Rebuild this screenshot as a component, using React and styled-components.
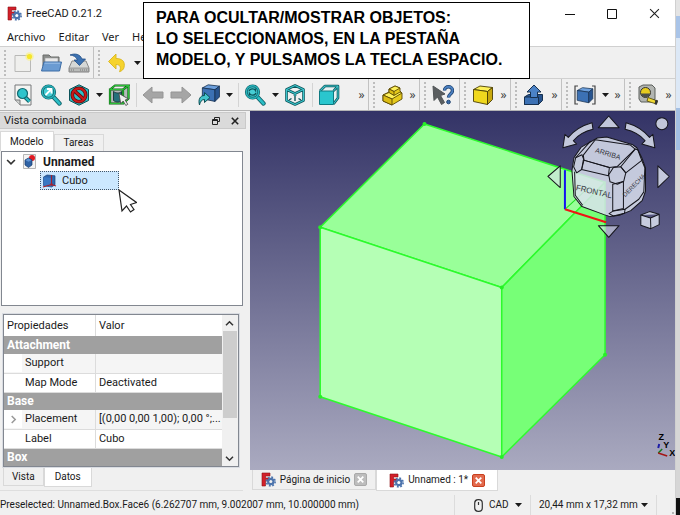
import React, { useState } from "react";
import styled, { createGlobalStyle, css } from "styled-components";

const menus = ["Archivo", "Editar", "Ver", "He"];

const properties = [
  { group: "Attachment" },
  { name: "Support", value: "", shaded: true },
  { name: "Map Mode", value: "Deactivated" },
  { group: "Base" },
  { name: "Placement", value: "[(0,00 0,00 1,00); 0,00 °;...", shaded: true, expandable: true },
  { name: "Label", value: "Cubo" },
  { group: "Box" },
];

/* ---------- icons ---------- */

const Icon = ({ size = 22, children }) => (
  <svg width={size} height={size} viewBox="0 0 22 22" fill="none" aria-hidden="true">
    {children}
  </svg>
);

const FreeCadLogo = () => (
  <svg width="15" height="15" viewBox="0 0 15 15" aria-hidden="true">
    <path d="M1 1h8v3H4.500v2H8v3H4.500v5H1z" fill="#d3202a" stroke="#8c1016" strokeWidth=".6" />
    <circle cx="9.800" cy="9.500" r="4.400" fill="none" stroke="#4c74ad" strokeWidth="1.600" strokeDasharray="1.800 1.650" />
    <circle cx="9.800" cy="9.500" r="2.700" fill="none" stroke="#4c74ad" strokeWidth="2.200" />
  </svg>
);

const NewIcon = () => (
  <Icon>
    <path d="M3 3.500h15.500v16H3z" fill="#efefed" stroke="#b9b9b7" />
    <circle cx="17.500" cy="4.500" r="4.300" fill="#fbf17a" opacity=".6" />
    <circle cx="17.500" cy="4.500" r="2.600" fill="#f5e62b" />
  </Icon>
);

const OpenIcon = () => (
  <Icon>
    <path d="M3 3h6l2 2h8v9H3z" fill="#8b8d8b" stroke="#6a6c6a" />
    <path d="M5 6h13v6H5z" fill="#e9e9e9" stroke="#9a9a9a" strokeWidth=".6" />
    <path d="M4 10h17.500l-2 9H1.500z" fill="#6a9bd2" stroke="#3d6ca5" />
    <path d="M4.600 11.200h15.600" stroke="#9cc0e8" />
  </Icon>
);

const SaveIcon = () => (
  <Icon>
    <path d="M4 9h14l3 7v4H1v-4z" fill="#d6d8d6" stroke="#888" />
    <path d="M1.500 16h19v3.600h-19z" fill="#b9bbb9" stroke="#888" strokeWidth=".7" />
    <path d="M12 18h7M3 18h4" stroke="#777" strokeDasharray="1 1" />
    <path d="M2 3c5-2 10-1 12 4h3.500l-6 6.500L6 8h3.500C8 4.500 5.500 3.500 2 3z" fill="#3d72b2" stroke="#234f86" strokeWidth=".8" />
  </Icon>
);

const UndoIcon = () => (
  <Icon>
    <path d="M10 2v4.500c6 0 9.500 3 8 9-.6 2-1.800 3.300-4.500 4.200 2-4.500.5-7.200-3.500-7.200V17L2.500 9.500z" fill="#f6d32d" stroke="#d8b520" strokeWidth=".9" />
  </Icon>
);

const Lens = () => (
  <g>
    <path d="M13 12.500l6.500 7" stroke="#0f6067" strokeWidth="4.400" strokeLinecap="round" />
    <path d="M13 12.500l6.500 7" stroke="#2bbdc5" strokeWidth="2.600" strokeLinecap="round" />
    <circle cx="8.500" cy="8" r="6.200" fill="#46cdd4" stroke="#0f6067" strokeWidth="2.800" />
    <circle cx="8.500" cy="8" r="6.200" stroke="#28b3bb" strokeWidth="1.400" />
  </g>
);

const FitAllIcon = () => (
  <Icon>
    <path d="M3 1h16v20H8l-5-5z" fill="#f4f4f2" stroke="#77797a" />
    <path d="M3 16h5v5" fill="#cfd1cf" stroke="#77797a" />
    <path d="M13 13l4.500 4.500" stroke="#0f6067" strokeWidth="4" />
    <path d="M13 13l4.500 4.500" stroke="#2bbdc5" strokeWidth="2.200" />
    <circle cx="10.500" cy="9.500" r="5" fill="#2fc4cc" stroke="#136b72" strokeWidth="1.200" />
  </Icon>
);

const FitSelectionIcon = () => (
  <Icon>
    <Lens />
    <path d="M5.500 11l5.500-5.500M7 5h4.500v4.500" stroke="#fff" strokeWidth="1.800" />
  </Icon>
);

const SyncViewIcon = () => (
  <Icon>
    <Lens />
    <path d="M5 7c1-2.500 5-3 6.500-.5V4.500M12 9c-1 2.500-5 3-6.500.5v2" stroke="#0c5359" strokeWidth="1.400" />
  </Icon>
);

const DrawStyleIcon = () => (
  <Icon>
    <path d="M11 .8l9.500 4.700v11L11 21.200l-9.500-4.700v-11z" fill="#2bc0c8" stroke="#0d5359" />
    <circle cx="11" cy="11" r="6.700" stroke="#5b0808" strokeWidth="3.600" />
    <path d="M6.300 6.800l9.400 8.400" stroke="#5b0808" strokeWidth="3.600" />
    <circle cx="11" cy="11" r="6.700" stroke="#c91a1a" strokeWidth="2.200" />
    <path d="M6.300 6.800l9.400 8.400" stroke="#c91a1a" strokeWidth="2.200" />
  </Icon>
);

const BoundingBoxIcon = () => (
  <Icon>
    <path d="M3 6l13-1 4-3v12l-5 5H3z" fill="#b5babb" />
    <path d="M5.500 7.500c3 2 6 2 8 0v9c-3 2-5 2-8 0z" fill="#25707a" stroke="#203b40" />
    <path d="M2 5.500h13v14H2zM2 5.500L7 1.500h13.500L15 5.500M20.500 1.500v13L15 19.500" stroke="#0b5a12" strokeWidth="2.200" />
    <path d="M2 5.500h13v14H2zM2 5.500L7 1.500h13.500L15 5.500M20.500 1.500v13L15 19.500" stroke="#2bbf37" strokeWidth="1.200" />
    <path d="M11 9.500l9.500 5.500-3.400 1 2.700 4.300-2 1.200-2.600-4.400-2.500 2.500z" fill="#eee" stroke="#444" strokeWidth=".8" />
  </Icon>
);

const BackIcon = () => (
  <Icon>
    <path d="M1 11l9-8v5h11v6H10v5z" fill="#a5a5a5" stroke="#959595" />
  </Icon>
);

const ForwardIcon = () => (
  <Icon>
    <path d="M21 11l-9-8v5H1v6h11v5z" fill="#a5a5a5" stroke="#959595" />
  </Icon>
);

const palettes = {
  blue: ["#6c9fdc", "#3c71b4", "#28548f", "#16304f"],
  yellow: ["#fdf05a", "#f0d81e", "#c9a90e", "#4a3e05"],
};

const Box = ({ tone }) => {
  const [top, front, side, line] = palettes[tone];
  return (
    <g stroke={line} strokeLinejoin="round" strokeWidth=".9">
      <path d="M1.500 5.500L8 2l12.500 1.500-5 4z" fill={top} />
      <path d="M1.500 5.500l14 2v13l-14-3z" fill={front} />
      <path d="M15.500 7.500l5-4v12l-5 5z" fill={side} />
    </g>
  );
};

const LinkIcon = () => (
  <Icon>
    <g transform="translate(3 -1) scale(.9)"><Box tone="blue" /></g>
    <path d="M1.500 21c-1.500-5.500.5-9.500 5-9.500V8.500l5.500 5-5.500 5v-3c-3 0-4.500 2.500-5 5.500z" fill="#42c3cb" stroke="#0d4f55" />
  </Icon>
);

const AxoIcon = () => (
  <Icon>
    <path d="M11 1.500l8.500 4v11L11 20.500l-8.500-4v-11zM2.500 5.500l8.500 4 8.500-4M11 9.500V12" stroke="#0c5359" strokeWidth="2.600" strokeLinejoin="round" />
    <path d="M11 1.500l8.500 4v11L11 20.500l-8.500-4v-11zM2.500 5.500l8.500 4 8.500-4M11 9.500V12" stroke="#3bc5cc" strokeWidth="1.200" strokeLinejoin="round" />
    <path d="M11 12v5M7.500 14.500L5 16M14.500 14.500L17 16" stroke="#0c5359" strokeWidth="1.400" />
  </Icon>
);

const FrontIcon = () => (
  <Icon>
    <path d="M2 7l5-5h13v12l-4.500 6V7z" fill="#e6f1f2" />
    <path d="M2 7l5-5h13l-4.500 5M20 2v12l-4.500 6" stroke="#0c5359" strokeWidth="2.600" strokeLinejoin="round" />
    <path d="M2 7l5-5h13l-4.500 5M20 2v12l-4.500 6" stroke="#3bc5cc" strokeWidth="1.100" strokeLinejoin="round" />
    <path d="M1.500 7h14v13.500h-14z" fill="#2ac6ce" stroke="#0e7a82" />
  </Icon>
);

const PartIcon = () => (
  <Icon>
    <g stroke="#5c4b05" strokeWidth=".9" strokeLinejoin="round">
      <path d="M2 11l6-3V5l6-3 5 2v3l2 2v6l-10 6-9-4z" fill="#e5c91c" />
      <path d="M8 5l6-3 5 2-6 3.500z" fill="#fdf05a" />
      <path d="M8 5l5 2.500v4L8 9z" fill="#dcbc14" />
      <path d="M2 11l6-2.500 5 3 6-3.500 2 1-10 6z" fill="#fdf05a" />
      <path d="M2 11l9 4v6l-9-4z" fill="#dcbc14" />
    </g>
  </Icon>
);

const WhatsThisIcon = () => (
  <Icon>
    <path d="M1 2l12 8-4.500 1.500 4 7-3 2-4-7.500L2 16.500z" fill="#5a5e60" stroke="#505456" />
    <path d="M12.500 6.500c0-5 8-5 8 0 0 3.500-4 3.500-4 7" stroke="#1f436f" strokeWidth="3.400" />
    <path d="M12.500 6.500c0-5 8-5 8 0 0 3.500-4 3.500-4 7" stroke="#4a7fc0" strokeWidth="1.800" />
    <circle cx="16.500" cy="18" r="1.800" fill="#3b6dab" stroke="#1f436f" />
  </Icon>
);

const YellowBoxIcon = () => (
  <Icon><Box tone="yellow" /></Icon>
);

const ExportIcon = () => (
  <Icon>
    <path d="M1.500 13l4-2.500h14v6l-4 4h-14z" fill="#28548f" stroke="#16304f" />
    <path d="M1.500 13h14v7.500h-14z" fill="#3c71b4" stroke="#16304f" />
    <path d="M11 1l7 7h-3.500v5.500h-7V8H4z" fill="#4b82c6" stroke="#16304f" />
  </Icon>
);

const BracketBoxIcon = () => (
  <Icon>
    <g transform="translate(2 2) scale(.82)"><Box tone="blue" /></g>
    <path d="M4 2H1v18h3M18 2h3v18h-3" stroke="#444" strokeWidth="1.200" />
  </Icon>
);

const TapeIcon = () => (
  <Icon>
    <path d="M2 3l4-2h9l3 3v11l-4 3H4l-2-3z" fill="#b2b5b2" stroke="#5b5e5b" />
    <circle cx="8.500" cy="8.500" r="5" fill="#e6cb1f" stroke="#333" />
    <path d="M4 9.500h9c0 5-9 5-9 0z" fill="#4c4f4c" />
    <path d="M11 13.500l9.500 3.500-1 3-9.500-3z" fill="#f1da33" stroke="#4c4205" strokeWidth=".8" />
    <path d="M18.500 15.500l2.500 1-1.500 4.500-2-1z" fill="#333" />
  </Icon>
);

const DocumentIcon = () => (
  <svg width="13" height="15" viewBox="0 0 13 15" aria-hidden="true">
    <path d="M.5.500h12v14H.5z" fill="#f4f4f4" stroke="#b5b5b5" />
    <circle cx="9" cy="4" r="3" fill="#e01b24" />
    <path d="M2 6l3.500-2L9 6v5l-3.500 2.500L2 11z" fill="#2f62a5" stroke="#173a68" strokeWidth=".7" />
    <path d="M2.500 6.200l3 1.600 3-1.600-3-1.600z" fill="#5f93d3" />
  </svg>
);

const CubeItemIcon = () => (
  <svg width="15" height="14" viewBox="0 0 15 14" aria-hidden="true">
    <path d="M1.500 3L5 1l8 .8v9L9.500 13l-8-1.500z" fill="#2c66ae" stroke="#1b4172" strokeWidth=".7" />
    <path d="M1.500 3l8 1V13l-8-1.500z" fill="#3878c4" />
    <path d="M9.500 1v9.500M1 13l8.500-2.500L14 12" stroke="#a5202c" strokeWidth="1.100" fill="none" />
    <circle cx="9.500" cy="10.500" r="1.300" fill="#a5202c" />
  </svg>
);

const Caret = () => (
  <svg width="7" height="4" viewBox="0 0 7 4" aria-hidden="true">
    <path d="M0 0h7L3.500 4z" fill="#1a1a1a" />
  </svg>
);

const Chevron = ({ turn = 0, color = "#333", size = 9 }) => (
  <svg width={size} height={size} viewBox="0 0 9 9" fill="none" aria-hidden="true">
    <path d="M1 2.700l3.500 3.500L8 2.700" stroke={color} strokeWidth="1.500" transform={`rotate(${turn} 4.500 4.500)`} />
  </svg>
);

const Cross = ({ size = 7, color = "#222", width = 1.5 }) => (
  <svg width={size} height={size} viewBox="0 0 10 10" aria-hidden="true">
    <path d="M1 1l8 8M9 1L1 9" stroke={color} strokeWidth={width} />
  </svg>
);

/* ---------- 3D view ---------- */

const Scene = () => (
  <SceneSvg viewBox="251 110 424 360" preserveAspectRatio="xMidYMid slice" role="img">
    <g stroke="#2cfb2c" strokeWidth="1.500" strokeLinejoin="round">
      <path d="M425 124L605 182 502 287 321 227z" fill="#99ff99" />
      <path d="M321 227l181 60v169l-181-60z" fill="#b5ffb5" />
      <path d="M502 287l103-105v172L502 456z" fill="#77ff77" />
    </g>
    <g fill="#26f026">
      {[[425, 124], [321, 227], [502, 287], [321, 396], [502, 456], [605, 354]].map(([x, y]) => (
        <circle key={`${x}-${y}`} cx={x} cy={y} r="2" />
      ))}
    </g>
    <path d="M565 209l24-22" stroke="#1de01d" />
    <path d="M565 170v39" stroke="#1414f0" strokeWidth="2" />
    <path d="M565 209l41 13" stroke="#f01414" strokeWidth="2" />

    <g transform="translate(530 105) scale(.33333)" fill="#dde2f0" fillOpacity=".84" stroke="#15151c" strokeWidth="3" strokeLinejoin="round">
      <path d="M236 33l31 35h-62z" />
      <path d="M236 396l31-35h-62z" fillOpacity=".6" />
      <path d="M54 214l37-32v65z" fillOpacity=".6" />
      <path d="M417 214l-34-32v65z" />
      <circle cx="395" cy="56" r="18" />
      <path d="M186 53l3 20c-26 6-45 18-59 34l10 10-41 11 6-40 10 9c18-22 42-36 71-44z" />
      <path d="M288 53l-3 20c26 6 46 18 60 34l-10 10 39 11-6-40-10 9c-18-22-41-36-70-44z" />
      <path d="M332 329l26-10 29 8v31l-25 12-30-10zM332 329l29 9 26-11M361 338l1 32" />
      <path d="M202 99l28-3 76 22 14 10 15 30 11 30v70l-10 28-34 30-34 14-28 4-18-6-66-24-24-30-6-78 6-38 22-32z" />
      <g fill="none">
        <path d="M196 104l105 16 14 12-53 52-24 3-76-22-2-15z" />
        <path d="M160 165l78 22-3 25-80-19z" />
        <path d="M137 158l19-9 6 16-7 28-15 10-9-18z" />
        <path d="M250 187l22-2 15 18-6 25-19 9-22-7-4-21z" />
        <path d="M315 132l8 2 12 32-48 37-15-18z" />
        <path d="M248 237l32-8v81l-32 7z" />
        <path d="M237 325l13-8 35-5-2 12-33 8z" />
        <path d="M335 166l9 22-3 72-15 22-41 30" />
        <path d="M137 158l45-50M134 200l2 70 22 30" />
      </g>
    </g>
    <CubeText x="608" y="156" $size={7} transform="rotate(17 608 153)">ARRIBA</CubeText>
    <CubeText x="594" y="194" $size={8} transform="rotate(13 594 191)">FRONTAL</CubeText>
    <CubeText x="634" y="187" $size={6} transform="rotate(-46 634 185)">DERECHA</CubeText>

    <path d="M658 447l1-4" stroke="#1c1ca8" strokeWidth="2" />
    <path d="M658 452l4-4" stroke="#137a1d" strokeWidth="1.500" />
    <path d="M658 452l9 3" stroke="#a31515" strokeWidth="1.500" />
    <AxisText x="661" y="439">Z</AxisText>
    <AxisText x="666" y="447">Y</AxisText>
    <AxisText x="672" y="455">X</AxisText>
  </SceneSvg>
);

/* ---------- toolbar pieces ---------- */

const Tool = ({ icon, label, menu }) => (
  <>
    <ToolButton aria-label={label}>{icon}</ToolButton>
    {menu && <MenuArrow aria-label={`${label} menu`}><Caret /></MenuArrow>}
  </>
);

const More = () => <MoreButton>»</MoreButton>;

const App = () => {
  const [dockTab, setDockTab] = useState("Modelo");
  const [dataTab, setDataTab] = useState("Datos");

  return (
    <>
      <GlobalStyle />
      <Desktop>
        <Window>
          <TitleBar>
            <FreeCadLogo />
            <span>FreeCAD 0.21.2</span>
            <WindowControls>
              <WindowButton aria-label="Minimizar">
                <svg width="10" height="10"><path d="M0 5.500h10" stroke="#111" /></svg>
              </WindowButton>
              <WindowButton aria-label="Maximizar">
                <svg width="10" height="10"><path d="M.5.500h9v9h-9z" fill="none" stroke="#111" /></svg>
              </WindowButton>
              <WindowButton aria-label="Cerrar">
                <Cross size={11} width={1} />
              </WindowButton>
            </WindowControls>
          </TitleBar>

          <MenuBar>
            {menus.map((menu) => (
              <MenuButton key={menu}>{menu}</MenuButton>
            ))}
          </MenuBar>

          <Toolbar>
            <ToolGroup>
              <Handle />
              <Tool icon={<NewIcon />} label="Nuevo" />
              <Tool icon={<OpenIcon />} label="Abrir" />
              <Tool icon={<SaveIcon />} label="Guardar" />
            </ToolGroup>
            <ToolGroup $grow>
              <Handle />
              <Tool icon={<UndoIcon />} label="Deshacer" menu />
            </ToolGroup>
          </Toolbar>

          <Toolbar>
            <ToolGroup $grow>
              <Handle />
              <Tool icon={<FitAllIcon />} label="Ajustar todo" />
              <Tool icon={<FitSelectionIcon />} label="Ajustar selección" />
              <Tool icon={<DrawStyleIcon />} label="Estilo de dibujo" menu />
              <Tool icon={<BoundingBoxIcon />} label="Cuadro delimitador" />
              <Separator />
              <Tool icon={<BackIcon />} label="Atrás" />
              <Tool icon={<ForwardIcon />} label="Adelante" />
              <Tool icon={<LinkIcon />} label="Ir al objeto vinculado" menu />
              <Separator />
              <Tool icon={<SyncViewIcon />} label="Sincronizar vista" menu />
              <Tool icon={<AxoIcon />} label="Isométrica" />
              <Separator />
              <Tool icon={<FrontIcon />} label="Frente" />
              <More />
            </ToolGroup>
            <ToolGroup>
              <Handle />
              <Tool icon={<PartIcon />} label="Crear pieza" />
              <More />
            </ToolGroup>
            <ToolGroup $padded>
              <Handle />
              <Tool icon={<WhatsThisIcon />} label="¿Qué es esto?" />
            </ToolGroup>
            <ToolGroup>
              <Handle />
              <Tool icon={<YellowBoxIcon />} label="Cubo" />
              <More />
            </ToolGroup>
            <ToolGroup>
              <Handle />
              <Tool icon={<ExportIcon />} label="Extruir" />
              <More />
            </ToolGroup>
            <ToolGroup>
              <Handle />
              <Tool icon={<BracketBoxIcon />} label="Compuesto" menu />
              <More />
            </ToolGroup>
            <ToolGroup>
              <Handle />
              <Tool icon={<TapeIcon />} label="Medir" />
              <More />
            </ToolGroup>
          </Toolbar>

          <Workspace>
            <Dock>
              <DockTitle>
                <span>Vista combinada</span>
                <DockButton aria-label="Desacoplar">
                  <svg width="8" height="8" fill="none" stroke="#222">
                    <path d="M2.500 2.500v-2h5v4h-2M.5 2.500h5v5h-5zM.5 3.500h5" />
                  </svg>
                </DockButton>
                <DockButton aria-label="Cerrar panel"><Cross size={8} width={2} /></DockButton>
              </DockTitle>

              <Tabs role="tablist">
                {["Modelo", "Tareas"].map((tab) => (
                  <Tab key={tab} role="tab" aria-selected={dockTab === tab} $active={dockTab === tab} onClick={() => setDockTab(tab)}>
                    {tab}
                  </Tab>
                ))}
              </Tabs>

              <Tree>
                <TreeRow>
                  <Chevron size={10} />
                  <DocumentIcon />
                  <strong>Unnamed</strong>
                </TreeRow>
                <TreeChild>
                  <CubeItemIcon />
                  Cubo
                  <Pointer viewBox="0 0 19 25">
                    <path d="M1 1l3 21 4.500-5 4 6 3.500-2.500-3.500-5 6-2z" fill="#fff" stroke="#222" strokeWidth="1.200" />
                  </Pointer>
                </TreeChild>
              </Tree>

              <PropertyView>
                <PropertyTable>
                  <thead>
                    <tr>
                      <th>Propiedades</th>
                      <th>Valor</th>
                    </tr>
                  </thead>
                  <tbody>
                    {properties.map((row) =>
                      row.group ? (
                        <GroupRow key={row.group}>
                          <th colSpan={2}>{row.group}</th>
                        </GroupRow>
                      ) : (
                        <PropertyRow key={row.name} $shaded={row.shaded}>
                          <td>
                            <NameCell>
                              <Expander>{row.expandable && <Chevron turn={-90} color="#999" />}</Expander>
                              <PropertyName>{row.name}</PropertyName>
                            </NameCell>
                          </td>
                          <td>{row.value}</td>
                        </PropertyRow>
                      )
                    )}
                  </tbody>
                </PropertyTable>
                <ScrollBar>
                  <ScrollButton aria-label="Subir"><Chevron turn={180} /></ScrollButton>
                  <ScrollThumb />
                  <ScrollButton aria-label="Bajar"><Chevron /></ScrollButton>
                </ScrollBar>
              </PropertyView>

              <BottomTabs role="tablist">
                {["Vista", "Datos"].map((tab) => (
                  <BottomTab key={tab} role="tab" aria-selected={dataTab === tab} $active={dataTab === tab} onClick={() => setDataTab(tab)}>
                    {tab}
                  </BottomTab>
                ))}
              </BottomTabs>
            </Dock>

            <Viewer>
              <Scene />
              <DocumentTabs>
                <DocumentTab>
                  <FreeCadLogo />
                  Página de inicio
                  <CloseTab aria-label="Cerrar página de inicio"><Cross color="#fff" width={2.5} /></CloseTab>
                </DocumentTab>
                <DocumentTab $active>
                  <FreeCadLogo />
                  Unnamed : 1*
                  <CloseTab $active aria-label="Cerrar documento"><Cross color="#fff" width={2.5} /></CloseTab>
                </DocumentTab>
              </DocumentTabs>
            </Viewer>
          </Workspace>

          <StatusBar>
            <StatusText>Preselected: Unnamed.Box.Face6 (6.262707 mm, 9.002007 mm, 10.000000 mm)</StatusText>
            <StatusField $wide>
              <svg width="9" height="13" viewBox="0 0 9 13" fill="none" aria-hidden="true">
                <rect x=".7" y=".7" width="7.600" height="11.600" rx="3.500" stroke="#333" strokeWidth="1.200" />
                <path d="M4.500 3v3" stroke="#333" strokeWidth="1.200" />
              </svg>
              <StatusSelect aria-label="Estilo de navegación">
                <option>CAD</option>
              </StatusSelect>
              <Caret />
            </StatusField>
            <StatusField>
              <StatusSelect aria-label="Dimensiones">
                <option>20,44 mm x 17,32 mm</option>
              </StatusSelect>
              <Caret />
            </StatusField>
            <Grip />
          </StatusBar>
        </Window>
        <Backdrop />
        <Note>
          PARA OCULTAR/MOSTRAR OBJETOS:
          <br />
          LO SELECCIONAMOS, EN LA PESTAÑA
          <br />
          MODELO, Y PULSAMOS LA TECLA ESPACIO.
        </Note>
      </Desktop>
    </>
  );
};

export default App;

const GlobalStyle = createGlobalStyle`
  * {
    box-sizing: border-box;
  }

  body {
    margin: 0;
    background: #f0f0f0;
    color: #1a1a1a;
    font-family: Roboto, "Open Sans", sans-serif;
    font-size: 11px;
    line-height: 16px;
  }

  button,
  select {
    margin: 0;
    padding: 0;
    border: 0;
    background: none;
    color: inherit;
    font: inherit;
  }

  svg {
    display: block;
    flex-shrink: 0;
  }
`;

const Desktop = styled.div`
  position: relative;
  display: flex;
  min-height: 100vh;
`;

const Window = styled.div`
  flex: 1;
  min-width: 0;
  display: flex;
  flex-direction: column;
`;

const Backdrop = styled.div`
  width: 5px;
  border-left: 1px solid #d0d0d0;
  background: linear-gradient(#e4e4e4 16px, #a9c4e8 16px 38px, #dce8f6 38px 108px, #a3bfe3 108px 150px, #d6d6d6 150px 498px, #111 498px);
`;

const Note = styled.p`
  position: absolute;
  top: 2px;
  left: 143px;
  width: 387px;
  margin: 0;
  padding: 4px 12px 8px;
  border: 1px solid #000;
  background: #fff;
  color: #000;
  font-family: "Liberation Sans", Arial, sans-serif;
  font-size: 16px;
  font-weight: 700;
  line-height: 21px;
  white-space: nowrap;
`;

const TitleBar = styled.header`
  display: flex;
  align-items: center;
  gap: 4px;
  height: 27px;
  padding-left: 7px;
  background: #fff;
`;

const WindowControls = styled.div`
  display: flex;
  margin-left: auto;
`;

const WindowButton = styled.button`
  display: flex;
  align-items: center;
  justify-content: center;
  width: 42px;
  height: 27px;
`;

const MenuBar = styled.nav`
  display: flex;
  gap: 13px;
  height: 19px;
  padding: 0 7px;
  background: #fff;
  font-family: "Noto Sans", "Open Sans", sans-serif;
`;

const MenuButton = styled.button`
  height: 20px;
`;

const Toolbar = styled.div`
  display: flex;
  height: 32px;
  border-top: 1px solid #d0d0d0;
  background: #f0f0f0;
`;

const ToolGroup = styled.div`
  display: flex;
  align-items: center;
  ${(props) => props.$grow && "flex: 1;"}
  ${(props) => props.$padded && "padding-right: 2px;"}

  & + & {
    border-left: 1px solid #c2c2c2;
  }
`;

const Handle = styled.span`
  width: 2px;
  height: 26px;
  margin: 0 3px 0 4px;
  background: repeating-linear-gradient(#bdbdbd 0 2px, transparent 2px 4px);
`;

const ToolButton = styled.button`
  display: flex;
  align-items: center;
  justify-content: center;
  width: 28px;
  height: 28px;
`;

const MenuArrow = styled.button`
  display: flex;
  align-items: center;
  justify-content: center;
  width: 12px;
  height: 28px;
`;

const MoreButton = styled.button`
  width: 13px;
  height: 28px;
  margin-left: auto;
  color: #444;
  font-family: "Noto Sans", "Open Sans", sans-serif;
  font-size: 12px;
`;

const Separator = styled.span`
  width: 1px;
  height: 24px;
  margin: 0 2px 0 3px;
  background: #d4d4d4;
`;

const Workspace = styled.main`
  flex: 1;
  display: grid;
  grid-template-columns: minmax(240px, 37%) 1fr;
  border-top: 1px solid #b4b4b4;
`;

const Dock = styled.section`
  display: flex;
  flex-direction: column;
  min-width: 0;
  padding-right: 4px;
`;

const DockTitle = styled.div`
  display: flex;
  align-items: center;
  gap: 9px;
  height: 17px;
  margin-top: 1px;
  padding: 0 5px 0 4px;
  border: 1px solid #c9c9c9;
  border-left: 0;
  background: #dadada;

  span {
    flex: 1;
  }
`;

const DockButton = styled.button`
  display: flex;
  align-items: center;
  justify-content: center;
  width: 10px;
  height: 14px;
`;

const Tabs = styled.div`
  display: flex;
  align-items: flex-end;
  height: 22px;
`;

const Tab = styled.button`
  height: 17px;
  padding: 0 9px;
  border: 1px solid #d9d9d9;
  border-bottom: 0;
  background: #f0f0f0;
  font-size: 10px;

  ${(props) =>
    props.$active &&
    css`
      height: 20px;
      background: #fff;
    `}
`;

const Tree = styled.div`
  flex: 1;
  margin: 0 3px 8px 1px;
  border: 1px solid #828790;
  background: #fff;
`;

const TreeRow = styled.div`
  display: flex;
  align-items: center;
  gap: 7px;
  height: 19px;
  padding-left: 4px;

  strong {
    font-size: 12px;
  }
`;

const TreeChild = styled.div`
  position: relative;
  display: flex;
  align-items: center;
  gap: 5px;
  width: 79px;
  height: 19px;
  margin-left: 38px;
  padding-left: 1px;
  border: 1px dotted #456;
  background: #cce8ff;
`;

const Pointer = styled.svg`
  position: absolute;
  top: 100%;
  left: 100%;
  width: 19px;
  height: 25px;
`;

const PropertyView = styled.div`
  display: flex;
  margin: 0 7px 0 3px;
  border: 1px solid #828790;
  outline: 1px solid #d9dce2;
  background: #fff;
`;

const PropertyTable = styled.table`
  flex: 1;
  width: 100%;
  min-width: 0;
  table-layout: fixed;
  border-collapse: collapse;

  th,
  td {
    height: 19px;
    padding: 0 3px;
    overflow: hidden;
    text-align: left;
    font-weight: 400;
    line-height: 16px;
    white-space: nowrap;
  }

  thead th {
    height: 21px;
  }

  thead th:first-child {
    width: 42%;
    border-right: 1px solid #dcdcdc;
  }
`;

const GroupRow = styled.tr`
  && th {
    height: 18px;
    background: #a0a0a0;
    color: #fff;
    font-size: 12px;
    font-weight: 700;
  }
`;

const PropertyRow = styled.tr`
  td {
    border-bottom: 1px solid #dcdcdc;
    background: ${(props) => (props.$shaded ? "#f5f5f5" : "#fff")};
  }

  && td:first-child {
    padding: 0;
    border-right: 1px solid #dcdcdc;
  }
`;

const NameCell = styled.div`
  display: flex;
  align-items: center;
  height: 18px;
`;

const Expander = styled.span`
  display: flex;
  align-items: center;
  justify-content: center;
  align-self: stretch;
  width: 18px;
  background: #fff;
`;

const PropertyName = styled.span`
  padding-left: 3px;
`;

const ScrollBar = styled.div`
  display: flex;
  flex-direction: column;
  flex-shrink: 0;
  width: 16px;
  background: #f0f0f0;
`;

const ScrollButton = styled.button`
  display: flex;
  align-items: center;
  justify-content: center;
  height: 16px;
`;

const ScrollThumb = styled.div`
  flex: 1;
  margin: 0 1px 32px;
  background: #cdcdcd;
`;

const BottomTabs = styled.div`
  display: flex;
  align-items: flex-start;
  height: 23px;
  margin: 1px 3px 0 0;
  padding-left: 3px;
  border-bottom: 1px solid #dedede;
`;

const BottomTab = styled.button`
  height: 18px;
  padding: 0 8px;
  border: 1px solid #d9d9d9;
  border-top: 0;
  background: #f0f0f0;
  font-size: 10px;

  ${(props) =>
    props.$active &&
    css`
      height: 19px;
      padding: 0 10px;
      background: #fff;
    `}
`;

const Viewer = styled.section`
  display: flex;
  flex-direction: column;
  min-width: 0;
`;

const SceneSvg = styled.svg`
  flex: 1 1 0;
  width: 100%;
  min-height: 0;
  background: linear-gradient(#333366, #aaaac0);
`;

const CubeText = styled.text`
  fill: #33343c;
  font-family: "Liberation Sans", Arial, sans-serif;
  font-size: ${(props) => props.$size}px;
  text-anchor: middle;
`;

const AxisText = styled.text`
  fill: #000;
  font-family: "Liberation Sans", Arial, sans-serif;
  font-size: 9px;
  font-weight: 700;
  text-anchor: middle;
`;

const DocumentTabs = styled.div`
  display: flex;
  align-items: flex-start;
  height: 21px;
  padding-left: 2px;
  font-size: 10px;
`;

const DocumentTab = styled.div`
  display: flex;
  align-items: center;
  gap: 4px;
  height: 20px;
  padding: 0 8px;
  border: 1px solid #d9d9d9;
  border-top: 0;
  background: #f0f0f0;

  ${(props) =>
    props.$active &&
    css`
      height: 21px;
      padding: 0 12px;
      background: #fff;
    `}
`;

const CloseTab = styled.button`
  display: flex;
  align-items: center;
  justify-content: center;
  width: 13px;
  height: 13px;
  border: 1px solid ${(props) => (props.$active ? "#c9401f" : "#a9a9a9")};
  border-radius: 2px;
  background: ${(props) => (props.$active ? "#e2694c" : "#bdbdbd")};
`;

const StatusBar = styled.footer`
  display: flex;
  align-items: center;
  height: 24px;
  padding-top: 4px;
  font-size: 10px;
`;

const StatusText = styled.span`
  flex: 1;
  white-space: nowrap;
`;

const StatusField = styled.div`
  display: flex;
  align-items: center;
  gap: ${(props) => (props.$wide ? 6 : 3)}px;
  height: 20px;
  padding: ${(props) => (props.$wide ? "0 8px 0 19px" : "0 8px")};
  border-left: 1px solid #dcdcdc;
`;

const StatusSelect = styled.select`
  appearance: none;
`;

const Grip = styled.span`
  align-self: flex-end;
  width: 19px;
  height: 20px;
  border-left: 1px solid #dcdcdc;
  background: radial-gradient(#b5b5b5 1px, transparent 1px) right bottom / 4px 4px no-repeat;
`;
